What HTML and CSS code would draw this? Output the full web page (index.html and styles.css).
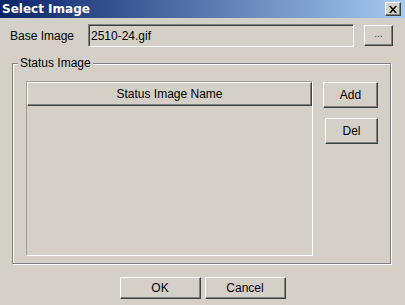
FILE: index.html
```html
<!DOCTYPE html>
<html>
<head>
<meta charset="utf-8">
<link rel="stylesheet" href="styles.css">
</head>
<body>
<div class="dialog">
  <div class="titlebar">
    <span class="title">Select Image</span>
    <span class="close"><svg width="8" height="7" viewBox="0 0 8 7"><path d="M0 0h2l2 2.5L6 0h2L5 3.5 8 7H6L4 4.5 2 7H0l3-3.5z" fill="#000"/></svg></span>
  </div>
  <div class="row">
    <span class="label">Base Image</span>
    <div class="field">2510-24.gif</div>
    <button class="btn browse">...</button>
  </div>
  <div class="group">
    <span class="legend">Status Image</span>
    <div class="table">
      <div class="th">Status Image Name</div>
    </div>
    <div class="side">
      <button class="btn add">Add</button>
      <button class="btn del">Del</button>
    </div>
  </div>
  <div class="footer">
    <button class="btn wide">OK</button>
    <button class="btn wide">Cancel</button>
  </div>
</div>
</body>
</html>
```

FILE: styles.css
```css
html, body {
  margin: 0;
  padding: 0;
  background: #d4d0c8;
}
.dialog {
  width: 405px;
  height: 305px;
  display: flex;
  flex-direction: column;
  font: 12px "Liberation Sans", Arial, sans-serif;
  color: #000;
  background: #d4d0c8;
  overflow: hidden;
}
.titlebar {
  height: 18px;
  display: flex;
  align-items: center;
  justify-content: space-between;
  padding: 0 4px 0 2px;
  background: linear-gradient(to right, #0a246a, #a6caf0);
}
.title {
  color: #fff;
  font: bold 12px "DejaVu Sans", sans-serif;
}
.close {
  width: 16px;
  height: 14px;
  box-sizing: border-box;
  display: flex;
  align-items: center;
  justify-content: center;
  background: #d4d0c8;
  border-top: 1px solid #fff;
  border-left: 1px solid #fff;
  border-right: 1px solid #404040;
  border-bottom: 1px solid #404040;
  box-shadow: inset -1px -1px 0 #808080;
}
.row {
  display: flex;
  align-items: center;
  height: 23px;
  margin-top: 6px;
  padding-left: 10px;
}
.label {
  width: 78px;
}
.field {
  width: 266px;
  height: 23px;
  box-sizing: border-box;
  padding: 4px 0 0 2px;
  border-top: 1px solid #808080;
  border-left: 1px solid #808080;
  border-right: 1px solid #fff;
  border-bottom: 1px solid #fff;
  box-shadow: inset 1px 1px 0 #404040;
  font-size: 12px;
}
.btn {
  box-sizing: border-box;
  margin: 0;
  padding: 0;
  background: #d4d0c8;
  font: 12px "Liberation Sans", Arial, sans-serif;
  color: #000;
  border-top: 1px solid #fff;
  border-left: 1px solid #fff;
  border-right: 1px solid #404040;
  border-bottom: 1px solid #404040;
  box-shadow: inset -1px -1px 0 #808080;
}
.browse {
  width: 29px;
  height: 21px;
  margin-left: 10px;
  padding-bottom: 4px;
  color: #444;
  font-size: 10px;
}
.group {
  position: relative;
  margin: 16px 0 0 12px;
  width: 379px;
  height: 201px;
  box-sizing: border-box;
  border: 1px solid #808080;
  box-shadow: inset 1px 1px 0 #fff, 1px 1px 0 #fff;
  display: flex;
  padding: 17px 0 0 13px;
  gap: 10px;
}
.legend {
  position: absolute;
  top: -8px;
  left: 5px;
  padding: 0 2px;
  background: #d4d0c8;
  line-height: 14px;
}
.table {
  width: 287px;
  height: 175px;
  box-sizing: border-box;
  border-top: 1px solid #a09c94;
  border-left: 1px solid #a09c94;
  border-right: 1px solid #fff;
  border-bottom: 1px solid #fff;
}
.th {
  height: 24px;
  box-sizing: border-box;
  display: flex;
  align-items: center;
  justify-content: center;
  border-top: 1px solid #fff;
  border-left: 1px solid #fff;
  border-right: 1px solid #404040;
  border-bottom: 1px solid #404040;
  box-shadow: inset -1px -1px 0 #808080;
}
.side {
  width: 55px;
  display: flex;
  flex-direction: column;
  align-items: flex-end;
  margin-top: 1px;
}
.add {
  width: 55px;
  height: 26px;
}
.del {
  width: 53px;
  height: 26px;
  margin-top: 10px;
}
.footer {
  display: flex;
  justify-content: center;
  gap: 4px;
  margin-top: 13px;
}
.wide {
  width: 81px;
  height: 22px;
}
```
